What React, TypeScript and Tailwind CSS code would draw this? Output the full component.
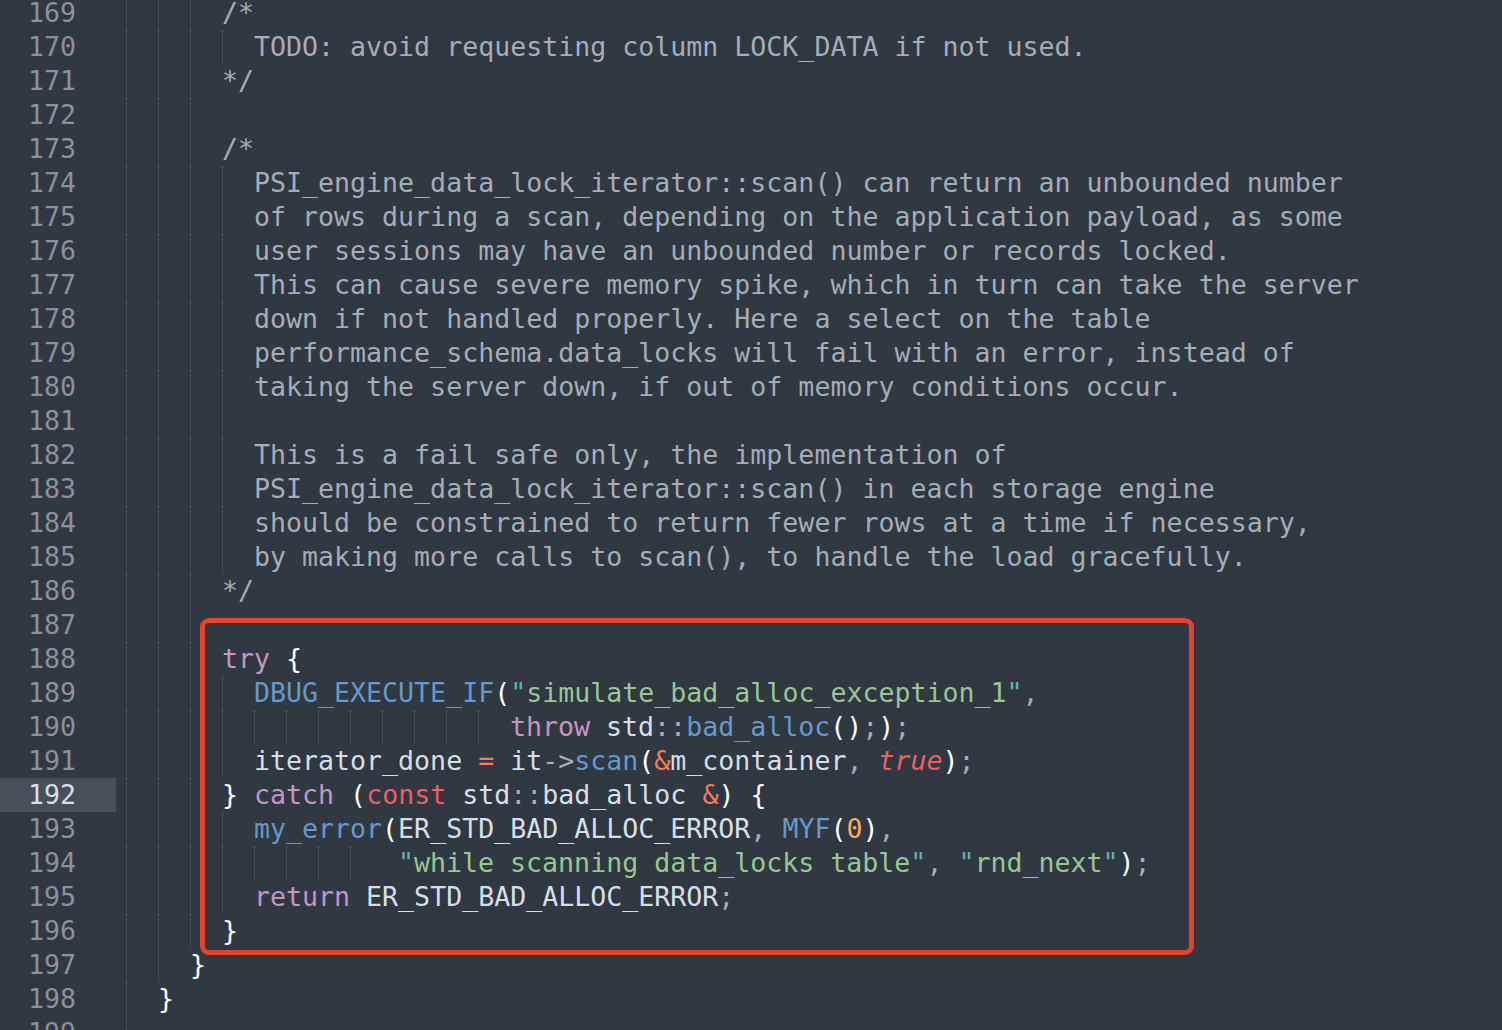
import React from "react";

type Tok = [string, string];

const C = "text-[#a6acb9]";
const K = "text-[#c695c6]";
const F = "text-[#6699cc]";
const S = "text-[#99c794]";
const Q = "text-[#5fb4b4]";
const O = "text-[#f97b58]";
const R = "text-[#ec5f66]";
const N = "text-[#f9ae58]";
const P = "text-[#a6acb9]";
const W = "text-white";
const D = "text-[#d8dee9]";

// indent = column where the text starts (or guide extent on empty lines)
const lines: { n: number; indent: number; toks: Tok[] }[] = [
  { n: 169, indent: 6, toks: [["/*", C]] },
  { n: 170, indent: 8, toks: [["TODO: avoid requesting column LOCK_DATA if not used.", C]] },
  { n: 171, indent: 6, toks: [["*/", C]] },
  { n: 172, indent: 6, toks: [] },
  { n: 173, indent: 6, toks: [["/*", C]] },
  { n: 174, indent: 8, toks: [["PSI_engine_data_lock_iterator::scan() can return an unbounded number", C]] },
  { n: 175, indent: 8, toks: [["of rows during a scan, depending on the application payload, as some", C]] },
  { n: 176, indent: 8, toks: [["user sessions may have an unbounded number or records locked.", C]] },
  { n: 177, indent: 8, toks: [["This can cause severe memory spike, which in turn can take the server", C]] },
  { n: 178, indent: 8, toks: [["down if not handled properly. Here a select on the table", C]] },
  { n: 179, indent: 8, toks: [["performance_schema.data_locks will fail with an error, instead of", C]] },
  { n: 180, indent: 8, toks: [["taking the server down, if out of memory conditions occur.", C]] },
  { n: 181, indent: 8, toks: [] },
  { n: 182, indent: 8, toks: [["This is a fail safe only, the implementation of", C]] },
  { n: 183, indent: 8, toks: [["PSI_engine_data_lock_iterator::scan() in each storage engine", C]] },
  { n: 184, indent: 8, toks: [["should be constrained to return fewer rows at a time if necessary,", C]] },
  { n: 185, indent: 8, toks: [["by making more calls to scan(), to handle the load gracefully.", C]] },
  { n: 186, indent: 6, toks: [["*/", C]] },
  { n: 187, indent: 6, toks: [] },
  { n: 188, indent: 6, toks: [["try", K], [" ", D], ["{", W]] },
  {
    n: 189,
    indent: 8,
    toks: [
      ["DBUG_EXECUTE_IF", F],
      ["(", W],
      ['"', Q],
      ["simulate_bad_alloc_exception_1", S],
      ['"', Q],
      [",", P],
    ],
  },
  {
    n: 190,
    indent: 24,
    toks: [
      ["throw", K],
      [" std", D],
      ["::", P],
      ["bad_alloc", F],
      ["()", W],
      [";", P],
      [")", W],
      [";", P],
    ],
  },
  {
    n: 191,
    indent: 8,
    toks: [
      ["iterator_done ", D],
      ["=", O],
      [" it", D],
      ["->", P],
      ["scan", F],
      ["(", W],
      ["&", O],
      ["m_container", D],
      [",", P],
      [" ", D],
      ["true", R + " italic"],
      [")", W],
      [";", P],
    ],
  },
  {
    n: 192,
    indent: 6,
    toks: [
      ["}", W],
      [" ", D],
      ["catch", K],
      [" ", D],
      ["(", W],
      ["const", R],
      [" std", D],
      ["::", P],
      ["bad_alloc ", D],
      ["&", O],
      [")", W],
      [" ", D],
      ["{", W],
    ],
  },
  {
    n: 193,
    indent: 8,
    toks: [
      ["my_error", F],
      ["(", W],
      ["ER_STD_BAD_ALLOC_ERROR", D],
      [",", P],
      [" ", D],
      ["MYF", F],
      ["(", W],
      ["0", N],
      [")", W],
      [",", P],
    ],
  },
  {
    n: 194,
    indent: 17,
    toks: [
      ['"', Q],
      ["while scanning data_locks table", S],
      ['"', Q],
      [",", P],
      [" ", D],
      ['"', Q],
      ["rnd_next", S],
      ['"', Q],
      [")", W],
      [";", P],
    ],
  },
  { n: 195, indent: 8, toks: [["return", K], [" ER_STD_BAD_ALLOC_ERROR", D], [";", P]] },
  { n: 196, indent: 6, toks: [["}", W]] },
  { n: 197, indent: 4, toks: [["}", W]] },
  { n: 198, indent: 2, toks: [["}", W]] },
  { n: 199, indent: 2, toks: [] },
];

const Indent = ({ cols }: { cols: number }) => {
  const parts: number[] = [];
  for (let c = 0; c < cols; c += 2) parts.push(Math.min(2, cols - c));
  return (
    <>
      {parts.map((w, i) =>
        w === 2 ? (
          <span key={i} className="h-[34px] w-[32px] shrink-0 border-l border-dotted border-[#566070]" />
        ) : (
          <span key={i} className="h-[34px] w-[16px] shrink-0" />
        )
      )}
    </>
  );
};

export default function App() {
  return (
    <div
      className="relative w-[1502px] h-[1030px] overflow-hidden bg-[#303841] text-[26.6px] leading-[34px]"
      style={{ fontFamily: '"DejaVu Sans Mono", "Liberation Mono", monospace' }}
    >
      <div className="mt-[-4px] flex flex-col">
        {lines.map((l) => (
          <div key={l.n} className="flex h-[34px]">
            <div
              className={
                "w-[116px] shrink-0 pr-[40px] text-right " +
                (l.n === 192 ? "bg-[#475059] text-[#d8dee9]" : "text-[#8b929c]")
              }
            >
              {l.n}
            </div>
            <div className="ml-[10px] flex whitespace-pre">
              <Indent cols={l.indent} />
              {l.toks.map((t, i) => (
                <span key={i} className={t[1]}>
                  {t[0]}
                </span>
              ))}
            </div>
          </div>
        ))}
      </div>
      {/* highlight box */}
      <div className="pointer-events-none absolute left-[200px] top-[618px] h-[337px] w-[994px] rounded-[9px] border-[5px] border-[#e8412c]" />
    </div>
  );
}
